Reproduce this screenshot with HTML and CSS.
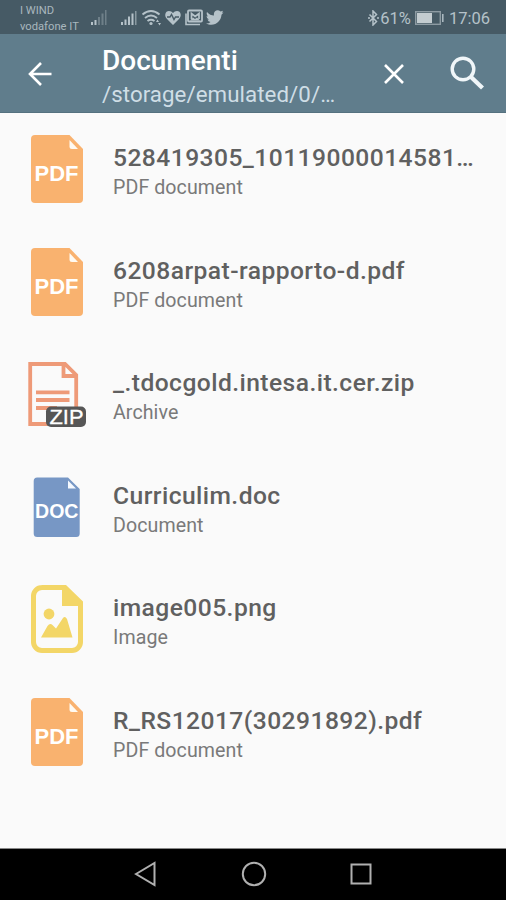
FILE: index.html
```html
<!DOCTYPE html>
<html lang="it">
<head>
<meta charset="utf-8">
<title>Documenti</title>
<link rel="stylesheet" href="styles.css">
</head>
<body>
<svg class="defs" aria-hidden="true">
  <symbol id="pdf" viewBox="0 0 60 68">
    <path d="M8 0H42.500L56 14V64a4 4 0 0 1-4 4H8a4 4 0 0 1-4-4V4a4 4 0 0 1 4-4Z" fill="#f9b26f"/>
    <path d="M42.500 5V11.500a2.500 2.500 0 0 0 2.500 2.500H51Z" fill="#fffaf2"/>
    <text x="7.500" y="46" textLength="44" lengthAdjust="spacingAndGlyphs" class="tag tag-pdf">PDF</text>
  </symbol>
</svg>
<div class="screen">
  <div class="status">
    <div class="carriers"><span>I WIND</span><span>vodafone IT</span></div>
    <svg class="status-icons" width="135" height="18" viewBox="0 0 135 18" fill="#b5c2c9">
      <path d="M1 13h2v3H1zM4.500 11h2v5h-2z"/>
      <path d="M8 8h2v8H8zM11.500 4.500h2V16h-2zM15 1h1.500v15H15z" fill="#6f8089"/>
      <path d="M31 13h2v3h-2zM34.500 10.500h2V16h-2zM38 7.500h2V16h-2zM41.500 4.500h2V16h-2z"/>
      <path d="M45 2h1.500v14H45z" fill="#8999a1"/>
      <g fill="none" stroke="#b5c2c9" stroke-width="1.900"><path d="M52.500 5.500Q61-1.500 69.500 5.500M55 9Q61 4 67 9M57.500 12Q61 9.500 64.500 12"/></g>
      <circle cx="61" cy="14.500" r="1.600"/><path d="m66 13 1.500-2.500L69 13zM68 14h3l-1.500 2.500z"/>
      <path d="M83 16 77 10C74 7 75 2 79 2q2.500 0 4 2 1.500-2 4-2c4 0 5 5 2 8Z"/>
      <path d="M77 8h3l1.500-2.500 2.500 5L85.500 8H89" fill="none" stroke="#485b66" stroke-width="1.400"/>
      <rect x="98" y="1.500" width="14" height="11" rx="1" fill="none" stroke="#b5c2c9" stroke-width="1.800"/>
      <path d="M96 4.500v11h14" fill="none" stroke="#b5c2c9" stroke-width="1.600"/>
      <path d="M101.500 10V4.500l3.700 3L109 4.500V10" fill="none" stroke="#b5c2c9" stroke-width="1.700"/><path d="M100 11.500h10l-3-3-2 1.500-2-1.500z"/>
      <path d="M117 3q3 3.500 7 3.500c-1-5 4-6.500 6.500-4L133 1.700l-1 2 1.500-.2-2 2.300C131 13 124 18.500 116 14.500q3 0 4.500-1.500-2.500-.5-3-2.500h1.500q-2.500-1-2.500-3.500l1.500.5Q116 5.500 117 3Z"/>
    </svg>
    <div class="status-right">
      <svg width="11" height="16" viewBox="0 0 11 16" fill="none" stroke="#b5c2c9" stroke-width="1.500"><path d="m1.500 4.500 7 7L5 15V1l3.500 3.500-7 7M0 8h2M9 8h2"/></svg>
      <span class="percent">61%</span>
      <svg class="battery" width="29" height="14" viewBox="0 0 29 14"><rect x=".7" y=".7" width="24.600" height="12.600" fill="none" stroke="#8d9ba3" stroke-width="1.400"/><path d="M2 2h15v10H2z" fill="#c3ccd0"/><path d="M27 3h1.600v8H27z" fill="#aab8bf"/></svg>
      <span class="clock">17:06</span>
    </div>
  </div>
  <header class="appbar">
    <svg class="back" width="24" height="24" viewBox="0 0 24 24" fill="none" stroke="#fff" stroke-width="2.600"><path d="M23.500 12H2M13 1 2 12l11 11"/></svg>
    <div class="heading">
      <h1>Documenti</h1>
      <p>/storage/emulated/0/…</p>
    </div>
    <svg class="close" width="20" height="20" viewBox="0 0 20 20" fill="none" stroke="#fff" stroke-width="2.600"><path d="m1 1 18 18M19 1 1 19"/></svg>
    <svg class="search" width="34" height="34" viewBox="0 0 34 34" fill="none" stroke="#f0f6f9"><circle cx="13" cy="13" r="10.800" stroke-width="3.400"/><path d="m21 21 11.500 11" stroke-width="4.300"/></svg>
  </header>
  <main class="files">
    <div class="row"><svg class="icon"><use href="#pdf"/></svg><div class="info"><div class="name">528419305_10119000014581…</div><div class="kind">PDF document</div></div></div>
    <div class="row"><svg class="icon"><use href="#pdf"/></svg><div class="info"><div class="name">6208arpat-rapporto-d.pdf</div><div class="kind">PDF document</div></div></div>
    <div class="row">
      <svg class="icon" viewBox="0 0 60 68"><g fill="none" stroke="#ee9a78" stroke-width="3.800"><path d="M3.200 4H38L49.200 15V64H3.200ZM36.500 4V16H49M9 32.300H42.500M9 40H42.500M9 48H30"/></g><rect x="19" y="46.500" width="40" height="20.500" rx="5" fill="#565656"/><text x="22.500" y="64" textLength="34" lengthAdjust="spacingAndGlyphs" class="tag tag-zip">ZIP</text></svg>
      <div class="info"><div class="name">_.tdocgold.intesa.it.cer.zip</div><div class="kind">Archive</div></div>
    </div>
    <div class="row">
      <svg class="icon" viewBox="0 0 60 68"><path d="M10.200 4.500H41L52.700 16V60.500a3.500 3.500 0 0 1-3.500 3.500h-39a3.500 3.500 0 0 1-3.500-3.500V8a3.500 3.500 0 0 1 3.500-3.500Z" fill="#7797c5"/><path d="M41 7.500V15.500H49Z" fill="#f5f9ff"/><text x="8" y="45" textLength="43.500" lengthAdjust="spacingAndGlyphs" class="tag tag-doc">DOC</text></svg>
      <div class="info"><div class="name">Curriculim.doc</div><div class="kind">Document</div></div>
    </div>
    <div class="row">
      <svg class="icon" viewBox="0 0 60 68" fill="#f3d667"><path d="M14.500 2.500H38L53.500 17.500V57a8.500 8.500 0 0 1-8.500 8.500H15A8.500 8.500 0 0 1 6.500 57V11a8.500 8.500 0 0 1 8.500-8.500Z" fill="none" stroke="#f3d667" stroke-width="5"/><path d="M35 2H39L55 18V21H35Z"/><circle cx="22" cy="29" r="5.400"/><path d="M14 52.500 20.500 41Q23 37.500 25.500 40L29 43.500 36 33Q38 30.500 40 34L45.500 52.500Z"/></svg>
      <div class="info"><div class="name">image005.png</div><div class="kind">Image</div></div>
    </div>
    <div class="row"><svg class="icon"><use href="#pdf"/></svg><div class="info"><div class="name">R_RS12017(30291892).pdf</div><div class="kind">PDF document</div></div></div>
  </main>
  <nav class="navbar">
    <svg width="24" height="26" viewBox="0 0 24 26"><path d="M2 13 20.500 2V24Z"/></svg>
    <svg width="26" height="26" viewBox="0 0 26 26"><circle cx="13" cy="13" r="11.200"/></svg>
    <svg width="24" height="26" viewBox="0 0 24 26"><rect x="2.500" y="3.500" width="19" height="19"/></svg>
  </nav>
</div>
</body>
</html>
```
FILE: styles.css
```css
* { box-sizing: border-box; }
body { margin: 0; font-family: Roboto, "Liberation Sans", sans-serif; }
.defs { display: none; }
.screen { width: 506px; height: 900px; display: flex; flex-direction: column; overflow: hidden; background: #fafafa; }
.status { height: 34px; display: flex; background: #465a65; color: #b5c2c9; }
.carriers { width: 90px; padding: 3px 0 0 20px; display: flex; flex-direction: column; font-size: 11.2px; line-height: 15.5px; white-space: nowrap; color: #a9b7be; }
.status-icons { margin-top: 9px; }
.status-right { margin-left: auto; padding-right: 16px; height: 34px; display: flex; align-items: center; padding-top: 2px; }
.percent { font-size: 16.5px; margin-left: 1px; }
.battery { margin: 0 5px 0 4px; }
.clock { font-size: 16.5px; }
.appbar { height: 79px; display: flex; background: #607d8c; color: #fff; border-bottom: 1px solid #55717f; }
.back { margin: 28px 0 0 28px; flex: none; }
.heading { width: 266px; margin-left: 50px; padding-top: 10px; }
h1 { margin: 0; font-size: 28px; line-height: 34px; font-weight: 500; }
.heading p { margin: 0; font-size: 22.3px; line-height: 33px; color: #cfdee6; letter-spacing: .05px; white-space: nowrap; }
.close { margin: 30px 0 0 16px; flex: none; }
.search { margin: 22px 0 0 46px; flex: none; }
.files { flex: 1; }
.row { height: 112.5px; display: flex; padding: 22px 0 0 27px; }
.icon { width: 60px; height: 68px; flex: none; }
.info { margin-left: 26px; padding-top: 7px; white-space: nowrap; }
.name { font-size: 24.6px; line-height: 31px; font-weight: 500; color: #606060; letter-spacing: .45px; }
.kind { font-size: 19.6px; line-height: 29px; color: #797979; letter-spacing: .08px; }
.tag { font-family: "Liberation Sans", sans-serif; fill: #fff; }
.tag-pdf { font-size: 22.5px; font-weight: 700; }
.tag-doc { font-size: 20px; font-weight: 700; }
.tag-zip { font-size: 21px; stroke: #fff; stroke-width: .3px; }
.navbar { height: 52px; display: flex; justify-content: space-between; padding: 12px 133px 0 134px; background: #000; border-top: 1px solid #888; }
.navbar svg { fill: none; stroke: #b0b0b0; stroke-width: 2; }
```
